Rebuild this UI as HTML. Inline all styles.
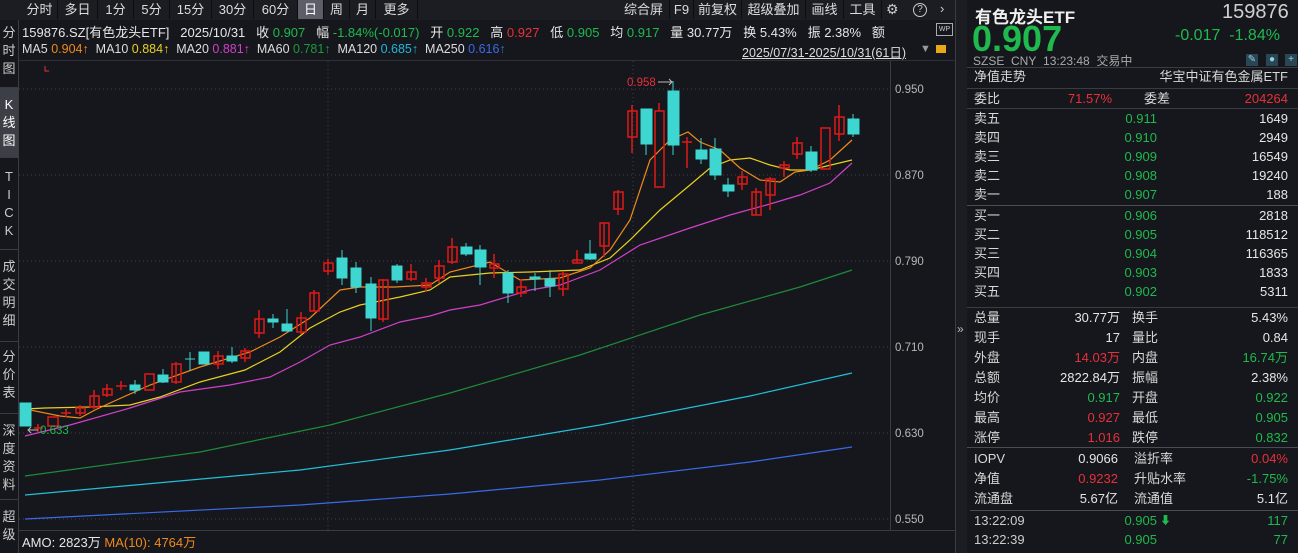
<!DOCTYPE html>
<html><head><meta charset="utf-8"><style>
*{margin:0;padding:0;box-sizing:border-box}
body{width:1298px;height:553px;background:#15171c;overflow:hidden;position:relative;font-family:"Liberation Sans","Noto Sans CJK SC",sans-serif;font-size:13px;color:#d8d8d8}
.a{position:absolute;white-space:nowrap}
.g{color:#1fb94e}.r{color:#e8303a}.w{color:#e6e6e6}.o{color:#f08a1a}
.tab{position:absolute;top:0;height:19px;line-height:19px;font-size:13px;color:#ddd;text-align:center;border-right:1px solid #0c0d10}
.side{position:absolute;left:0;width:18px;font-size:13px;color:#ccc;text-align:center;line-height:18px;border-bottom:1px solid #3a3c42}
.row{position:absolute;left:972px;width:316px;height:20px;line-height:20px;font-size:13px}
.row span{position:absolute}
.ic{position:absolute;top:54px;width:12px;height:12px;background:#2a4654;color:#8fd0e0;font-size:10px;line-height:12px;text-align:center}
</style></head><body>
<div class="a" style="left:0;top:0;width:958px;height:20px;background:#1b1d22"></div>
<div class="tab" style="left:22px;width:36px">分时</div>
<div class="tab" style="left:58px;width:40px">多日</div>
<div class="tab" style="left:98px;width:36px">1分</div>
<div class="tab" style="left:134px;width:36px">5分</div>
<div class="tab" style="left:170px;width:42px">15分</div>
<div class="tab" style="left:212px;width:42px">30分</div>
<div class="tab" style="left:254px;width:44px">60分</div>
<div class="tab" style="left:298px;width:26px;background:#5c5f68;color:#fff">日</div>
<div class="tab" style="left:324px;width:26px">周</div>
<div class="tab" style="left:350px;width:26px">月</div>
<div class="tab" style="left:376px;width:42px">更多</div>
<div class="tab" style="left:618px;width:52px">综合屏</div>
<div class="tab" style="left:670px;width:24px">F9</div>
<div class="tab" style="left:694px;width:48px">前复权</div>
<div class="tab" style="left:742px;width:64px">超级叠加</div>
<div class="tab" style="left:806px;width:38px">画线</div>
<div class="tab" style="left:844px;width:38px">工具</div>
<div class="a" style="left:886px;top:1px;font-size:14px;color:#ccc">⚙</div>
<div class="a" style="left:913px;top:3px;width:14px;height:14px;border:1.5px solid #ccc;border-radius:50%;font-size:10px;line-height:11px;text-align:center;color:#ccc">?</div>
<div class="a" style="left:940px;top:1px;color:#ccc">›</div>

<div class="a" style="left:18px;top:20px;width:1px;height:533px;background:#3a3c42"></div>
<div class="side" style="top:20px;height:68px;padding-top:4px">分<br>时<br>图</div>
<div class="side" style="top:88px;height:70px;padding-top:8px;background:#3c3f46;color:#fff">K<br>线<br>图</div>
<div class="side" style="top:158px;height:92px;padding-top:10px">T<br>I<br>C<br>K</div>
<div class="side" style="top:250px;height:92px;padding-top:8px">成<br>交<br>明<br>细</div>
<div class="side" style="top:342px;height:72px;padding-top:6px">分<br>价<br>表</div>
<div class="side" style="top:414px;height:86px;padding-top:8px">深<br>度<br>资<br>料</div>
<div class="side" style="top:500px;height:53px;padding-top:8px;border:none">超<br>级</div>

<div class="a w" style="left:22px;top:22px">159876.SZ[有色龙头ETF]&nbsp;&nbsp;&nbsp;2025/10/31&nbsp;&nbsp;&nbsp;收 <span class="g">0.907</span>&nbsp;&nbsp;&nbsp;幅 <span class="g">-1.84%(-0.017)</span>&nbsp;&nbsp;&nbsp;开 <span class="g">0.922</span>&nbsp;&nbsp;&nbsp;高 <span class="r">0.927</span>&nbsp;&nbsp;&nbsp;低 <span class="g">0.905</span>&nbsp;&nbsp;&nbsp;均 <span class="g">0.917</span>&nbsp;&nbsp;&nbsp;量 30.77万&nbsp;&nbsp;&nbsp;换 5.43%&nbsp;&nbsp;&nbsp;振 2.38%&nbsp;&nbsp;&nbsp;额</div>
<div class="a" style="left:936px;top:23px;width:17px;height:13px;border:1px solid #aaa;font-size:7px;line-height:11px;text-align:center;color:#ccc">WP</div>
<div class="a" style="left:22px;top:42px;font-size:12.5px;color:#ddd">MA5 <span style="color:#f08a1a">0.904↑</span>&nbsp; MA10 <span style="color:#e8d020">0.884↑</span>&nbsp; MA20 <span style="color:#d040c8">0.881↑</span>&nbsp; MA60 <span style="color:#1a9a3a">0.781↑</span>&nbsp; MA120 <span style="color:#20b8d8">0.685↑</span>&nbsp; MA250 <span style="color:#3a6ae8">0.616↑</span></div>
<div class="a" style="left:742px;top:42px;font-size:12.5px;color:#ddd;text-decoration:underline">2025/07/31-2025/10/31(61日)</div>
<div class="a" style="left:920px;top:43px;color:#999;font-size:11px">▼</div>
<div class="a" style="left:936px;top:45px;width:10px;height:8px;background:#e8a818"></div>

<svg class="a" style="left:0;top:0" width="958" height="553">
<line x1="19" y1="60.5" x2="958" y2="60.5" stroke="#2e3036"/>
<line x1="890.5" y1="61" x2="890.5" y2="530" stroke="#3a3c42"/>
<line x1="19" y1="530.5" x2="958" y2="530.5" stroke="#3a3c42"/>
<line x1="955.5" y1="0" x2="955.5" y2="553" stroke="#3a3c42"/>
<g stroke="#3e4148" stroke-dasharray="1,3">
<line x1="19" y1="89" x2="890" y2="89"/><line x1="19" y1="175" x2="890" y2="175"/><line x1="19" y1="261" x2="890" y2="261"/><line x1="19" y1="347" x2="890" y2="347"/><line x1="19" y1="433" x2="890" y2="433"/><line x1="19" y1="519" x2="890" y2="519"/>
<line x1="328" y1="61" x2="328" y2="530"/><line x1="633" y1="61" x2="633" y2="530"/>
</g>
<g fill="#b8b8b8" font-size="11.5" font-family="Liberation Sans">
<text x="895" y="93">0.950</text><text x="895" y="179">0.870</text><text x="895" y="265">0.790</text><text x="895" y="351">0.710</text><text x="895" y="437">0.630</text><text x="895" y="523">0.550</text>
</g>
<path d="M45 66v5h4" stroke="#e8303a" fill="none"/>
<polyline fill="none" stroke="#1e8a3a" stroke-width="1.2" points="25,476 200,452 330,425 450,393 580,355 700,315 800,287 852,270"/>
<polyline fill="none" stroke="#22c0d8" stroke-width="1.2" points="25,495 300,470 450,450 600,425 750,396 852,373"/>
<polyline fill="none" stroke="#3a6ae8" stroke-width="1.2" points="25,519 300,505 450,494 600,480 750,462 852,447"/>
<polyline fill="none" stroke="#d040c8" stroke-width="1.2" points="25,436 70,425 130,408 180,392 230,385 270,377 300,362 330,345 360,337 400,322 430,316 450,310 480,305 530,290 560,285 600,270 640,245 690,228 730,215 770,204 800,195 830,183 852,163"/>
<polyline fill="none" stroke="#e8d020" stroke-width="1.2" points="25,409 45,408 90,407 130,405 160,397 200,382 245,370 280,352 310,328 340,312 360,305 400,297 430,290 450,277 490,273 530,272 580,270 610,258 630,240 660,210 690,185 710,168 730,160 750,158 770,165 790,170 810,170 852,160"/>
<polyline fill="none" stroke="#f08a1a" stroke-width="1.2" points="25,403 30,410 60,416 80,418 95,410 110,403 150,385 200,367 250,352 280,337 310,318 340,290 360,287 395,287 430,285 450,272 490,262 520,280 560,278 590,268 610,250 630,220 650,160 670,140 688,132 700,142 720,150 740,168 760,180 780,182 795,172 810,170 830,160 852,140"/>
<g fill="#3ed6d0" stroke="#3ed6d0">
<rect x="20" y="403" width="11" height="23"/><rect x="130" y="385" width="10" height="5"/><line x1="135" y1="380" x2="135" y2="394"/>
<rect x="158" y="375" width="10" height="7"/><line x1="163" y1="369" x2="163" y2="383"/>
<line x1="185" y1="359" x2="195" y2="359"/><line x1="190" y1="352" x2="190" y2="371"/>
<rect x="199" y="352" width="10" height="12"/><rect x="227" y="356" width="10" height="5"/><line x1="232" y1="347" x2="232" y2="363"/>
<rect x="268" y="319" width="10" height="3"/><line x1="273" y1="314" x2="273" y2="328"/>
<rect x="282" y="324" width="10" height="7"/><line x1="287" y1="309" x2="287" y2="331"/>
<rect x="337" y="258" width="10" height="20"/><line x1="342" y1="250" x2="342" y2="285"/>
<rect x="351" y="268" width="10" height="19"/><line x1="356" y1="262" x2="356" y2="293"/>
<rect x="366" y="284" width="10" height="34"/><line x1="371" y1="277" x2="371" y2="331"/>
<rect x="392" y="266" width="10" height="14"/><line x1="397" y1="264" x2="397" y2="283"/>
<rect x="461" y="247" width="11" height="7"/><line x1="466" y1="243" x2="466" y2="256"/>
<rect x="475" y="250" width="11" height="17"/><line x1="480" y1="245" x2="480" y2="285"/>
<rect x="503" y="273" width="10" height="20"/><line x1="508" y1="270" x2="508" y2="303"/>
<rect x="530" y="277" width="10" height="2"/><line x1="535" y1="273" x2="535" y2="291"/>
<rect x="545" y="279" width="10" height="7"/><line x1="550" y1="270" x2="550" y2="297"/>
<rect x="585" y="254" width="11" height="5"/><line x1="590" y1="240" x2="590" y2="260"/>
<rect x="641" y="109" width="11" height="35"/><line x1="646" y1="109" x2="646" y2="155"/>
<rect x="668" y="91" width="11" height="54"/><line x1="673" y1="81" x2="673" y2="155"/>
<rect x="696" y="150" width="11" height="9"/><line x1="701" y1="138" x2="701" y2="164"/>
<rect x="710" y="149" width="11" height="26"/><line x1="715" y1="138" x2="715" y2="180"/>
<rect x="723" y="185" width="11" height="6"/><line x1="728" y1="178" x2="728" y2="197"/>
<rect x="806" y="152" width="11" height="18"/><line x1="811" y1="146" x2="811" y2="172"/>
<rect x="848" y="119" width="11" height="15"/><line x1="853" y1="114" x2="853" y2="137"/>
</g>
<g fill="none" stroke="#e01818" stroke-width="1.5">
<path d="M34 428h9M38 424v8"/><rect x="48" y="417" width="10" height="9"/>
<path d="M61 413h10M66 409v8"/><rect x="76" y="408" width="9" height="5"/><line x1="80" y1="405" x2="80" y2="416"/>
<rect x="90" y="396" width="9" height="11"/><line x1="94" y1="390" x2="94" y2="409"/>
<rect x="103" y="389" width="9" height="6"/><line x1="107" y1="384" x2="107" y2="397"/>
<path d="M116 386h11M121 381v9"/>
<rect x="145" y="374" width="9" height="16"/>
<rect x="172" y="364" width="9" height="18"/><line x1="176" y1="362" x2="176" y2="384"/>
<rect x="214" y="356" width="9" height="8"/><line x1="218" y1="351" x2="218" y2="369"/>
<rect x="241" y="351" width="9" height="7"/><line x1="245" y1="348" x2="245" y2="362"/>
<rect x="255" y="319" width="9" height="14"/><line x1="259" y1="310" x2="259" y2="338"/>
<rect x="297" y="318" width="9" height="14"/><line x1="301" y1="312" x2="301" y2="334"/>
<rect x="310" y="293" width="9" height="18"/><line x1="314" y1="290" x2="314" y2="311"/>
<rect x="324" y="263" width="9" height="8"/><line x1="328" y1="259" x2="328" y2="275"/>
<rect x="379" y="280" width="9" height="39"/><line x1="383" y1="279" x2="383" y2="322"/>
<rect x="407" y="272" width="9" height="7"/><line x1="411" y1="264" x2="411" y2="281"/>
<rect x="422" y="283" width="9" height="4"/><line x1="426" y1="278" x2="426" y2="292"/>
<rect x="435" y="266" width="9" height="12"/><line x1="439" y1="260" x2="439" y2="283"/>
<rect x="448" y="247" width="9" height="15"/><line x1="452" y1="238" x2="452" y2="264"/>
<rect x="490" y="264" width="9" height="4"/><line x1="494" y1="254" x2="494" y2="278"/>
<rect x="517" y="287" width="9" height="6"/><line x1="521" y1="279" x2="521" y2="297"/>
<rect x="559" y="274" width="9" height="15"/><line x1="563" y1="272" x2="563" y2="296"/>
<rect x="573" y="260" width="9" height="3"/><line x1="577" y1="250" x2="577" y2="263"/>
<rect x="600" y="223" width="9" height="23"/><line x1="604" y1="223" x2="604" y2="257"/>
<rect x="614" y="192" width="9" height="17"/><line x1="618" y1="190" x2="618" y2="215"/>
<rect x="628" y="111" width="9" height="26"/><line x1="632" y1="105" x2="632" y2="153"/>
<rect x="655" y="111" width="9" height="76"/><line x1="659" y1="103" x2="659" y2="111"/>
<path d="M682 142h10M687 137v31"/>
<rect x="738" y="177" width="9" height="7"/><line x1="742" y1="171" x2="742" y2="190"/>
<rect x="752" y="192" width="9" height="23"/><line x1="756" y1="188" x2="756" y2="215"/>
<rect x="766" y="179" width="9" height="16"/><line x1="770" y1="177" x2="770" y2="210"/>
<rect x="780" y="165" width="9" height="3"/><line x1="784" y1="161" x2="784" y2="177"/>
<rect x="793" y="143" width="9" height="11"/><line x1="797" y1="137" x2="797" y2="159"/>
<rect x="821" y="128" width="9" height="41"/>
<rect x="835" y="117" width="9" height="17"/><line x1="839" y1="105" x2="839" y2="141"/>
</g>
<text x="627" y="86" fill="#e8303a" font-size="11.5" font-family="Liberation Sans">0.958</text>
<path d="M658 82h14M669 79l3 3-3 3" stroke="#bbb" fill="none"/>
<path d="M38 430h-9M31 427l-3 3 3 3" stroke="#bbb" fill="none"/>
<text x="40" y="434" fill="#1fb94e" font-size="11.5" font-family="Liberation Sans">0.633</text>
</svg>
<div class="a" style="left:22px;top:532px;color:#e6e6e6">AMO: 2823万 <span class="o">MA(10): 4764万</span></div>

<div class="a" style="left:956px;top:0;width:11px;height:553px;background:#1b1d22"></div>
<div class="a" style="left:957px;top:322px;color:#bbb;font-size:12px">»</div>
<div class="a" style="left:975px;top:3px;font-size:17px;font-weight:bold;color:#f0f0f0">有色龙头ETF</div>
<div class="a" style="left:1222px;top:1px;font-size:20px;color:#d0d0d0">159876</div>
<div class="a g" style="left:972px;top:18px;font-size:36px;font-weight:bold">0.907</div>
<div class="a g" style="left:1175px;top:27px;font-size:16px">-0.017&nbsp;&nbsp;-1.84%</div>
<div class="a" style="left:973px;top:52px;font-size:12px;color:#aaa">SZSE&nbsp;&nbsp;CNY&nbsp;&nbsp;13:23:48&nbsp;&nbsp;交易中</div>
<div class="ic" style="left:1246px">✎</div>
<div class="ic" style="left:1266px">●</div>
<div class="ic" style="left:1285px">+</div>
<div class="a" style="left:967px;top:67px;width:331px;height:1px;background:#3a3c42"></div>
<div class="row" style="top:67px"><span style="left:2px">净值走势</span><span style="right:0">华宝中证有色金属ETF</span></div>
<div class="a" style="left:967px;top:88px;width:331px;height:1px;background:#3a3c42"></div>
<div class="row" style="top:89px"><span style="left:2px">委比</span><span class="r" style="right:176px">71.57%</span><span style="left:172px">委差</span><span class="r" style="right:0">204264</span></div>
<div class="a" style="left:967px;top:108px;width:331px;height:1px;background:#3a3c42"></div>
<div class="row" style="top:109px"><span style="left:2px">卖五</span><span class="g" style="right:131px">0.911</span><span class="w" style="right:0">1649</span></div>
<div class="row" style="top:128px"><span style="left:2px">卖四</span><span class="g" style="right:131px">0.910</span><span class="w" style="right:0">2949</span></div>
<div class="row" style="top:147px"><span style="left:2px">卖三</span><span class="g" style="right:131px">0.909</span><span class="w" style="right:0">16549</span></div>
<div class="row" style="top:166px"><span style="left:2px">卖二</span><span class="g" style="right:131px">0.908</span><span class="w" style="right:0">19240</span></div>
<div class="row" style="top:185px"><span style="left:2px">卖一</span><span class="g" style="right:131px">0.907</span><span class="w" style="right:0">188</span></div>
<div class="a" style="left:967px;top:205px;width:331px;height:1px;background:#4a4c52"></div>
<div class="row" style="top:206px"><span style="left:2px">买一</span><span class="g" style="right:131px">0.906</span><span class="w" style="right:0">2818</span></div>
<div class="row" style="top:225px"><span style="left:2px">买二</span><span class="g" style="right:131px">0.905</span><span class="w" style="right:0">118512</span></div>
<div class="row" style="top:244px"><span style="left:2px">买三</span><span class="g" style="right:131px">0.904</span><span class="w" style="right:0">116365</span></div>
<div class="row" style="top:263px"><span style="left:2px">买四</span><span class="g" style="right:131px">0.903</span><span class="w" style="right:0">1833</span></div>
<div class="row" style="top:282px"><span style="left:2px">买五</span><span class="g" style="right:131px">0.902</span><span class="w" style="right:0">5311</span></div>
<div class="a" style="left:967px;top:307px;width:331px;height:1px;background:#3a3c42"></div>
<div class="row" style="top:308px"><span style="left:2px">总量</span><span class="w" style="right:168px">30.77万</span><span style="left:160px">换手</span><span class="w" style="right:0">5.43%</span></div>
<div class="row" style="top:328px"><span style="left:2px">现手</span><span class="w" style="right:168px">17</span><span style="left:160px">量比</span><span class="w" style="right:0">0.84</span></div>
<div class="row" style="top:348px"><span style="left:2px">外盘</span><span class="r" style="right:168px">14.03万</span><span style="left:160px">内盘</span><span class="g" style="right:0">16.74万</span></div>
<div class="row" style="top:368px"><span style="left:2px">总额</span><span class="w" style="right:168px">2822.84万</span><span style="left:160px">振幅</span><span class="w" style="right:0">2.38%</span></div>
<div class="row" style="top:388px"><span style="left:2px">均价</span><span class="g" style="right:168px">0.917</span><span style="left:160px">开盘</span><span class="g" style="right:0">0.922</span></div>
<div class="row" style="top:408px"><span style="left:2px">最高</span><span class="r" style="right:168px">0.927</span><span style="left:160px">最低</span><span class="g" style="right:0">0.905</span></div>
<div class="row" style="top:428px"><span style="left:2px">涨停</span><span class="r" style="right:168px">1.016</span><span style="left:160px">跌停</span><span class="g" style="right:0">0.832</span></div>
<div class="a" style="left:967px;top:447px;width:331px;height:1px;background:#4a4c52"></div>
<div class="row" style="top:449px"><span style="left:2px">IOPV</span><span class="w" style="right:170px">0.9066</span><span style="left:162px">溢折率</span><span class="r" style="right:0">0.04%</span></div>
<div class="row" style="top:469px"><span style="left:2px">净值</span><span class="r" style="right:170px">0.9232</span><span style="left:162px">升贴水率</span><span class="g" style="right:0">-1.75%</span></div>
<div class="row" style="top:489px"><span style="left:2px">流通盘</span><span class="w" style="right:170px">5.67亿</span><span style="left:162px">流通值</span><span class="w" style="right:0">5.1亿</span></div>
<div class="a" style="left:970px;top:510px;width:328px;height:1px;background:#4a4c52"></div>
<div class="row" style="top:511px"><span style="left:2px;color:#ccc">13:22:09</span><span class="g" style="right:131px">0.905</span><span class="g" style="left:188px;font-size:11px">⬇</span><span class="g" style="right:0">117</span></div>
<div class="row" style="top:530px"><span style="left:2px;color:#ccc">13:22:39</span><span class="g" style="right:131px">0.905</span><span class="g" style="right:0">77</span></div>
</body></html>
